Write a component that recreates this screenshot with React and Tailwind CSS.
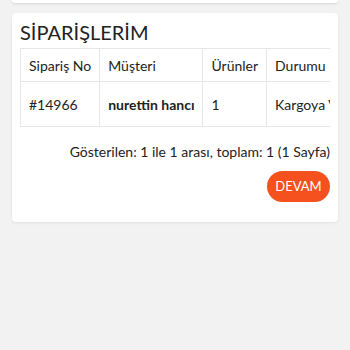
export default function App() {
  const cell = "border border-[#e6e6e6] px-2 text-left whitespace-nowrap";
  return (
    <div className="min-h-[350px] bg-[#f2f2f2] font-['Lato',sans-serif] text-[#222]">
      <div className="mx-3 h-[3px] rounded-b bg-white shadow-sm" />
      <div className="mx-3 mt-[10px] rounded bg-white px-2 pb-5 pt-[6px] shadow-[0_1px_3px_rgba(0,0,0,0.08)]">
        <h1 className="text-[20px] leading-[26px] text-[#222]">SİPARİŞLERİM</h1>
        <div className="mt-[3px] overflow-hidden">
          <table className="border-collapse text-[14px]">
            <thead>
              <tr className="h-[33px]">
                <th className={`${cell} w-[78px] font-normal`}>Sipariş No</th>
                <th className={`${cell} w-[103px] font-normal`}>Müşteri</th>
                <th className={`${cell} w-[61px] font-normal`}>Ürünler</th>
                <th className={`${cell} font-normal`}>Durumu</th>
              </tr>
            </thead>
            <tbody>
              <tr className="h-[45px]">
                <td className={cell}>#14966</td>
                <td className={`${cell} font-bold`}>nurettin hancı</td>
                <td className={cell}>1</td>
                <td className={cell}>Kargoya Verildi</td>
              </tr>
            </tbody>
          </table>
        </div>
        <p className="mt-[15px] text-right text-[14px] leading-5">Gösterilen: 1 ile 1 arası, toplam: 1 (1 Sayfa)</p>
        <div className="mt-[9px] flex justify-end">
          <button className="h-[31px] w-[63px] rounded-full bg-[#f4511e] text-[13px] text-white">DEVAM</button>
        </div>
      </div>
    </div>
  );
}
